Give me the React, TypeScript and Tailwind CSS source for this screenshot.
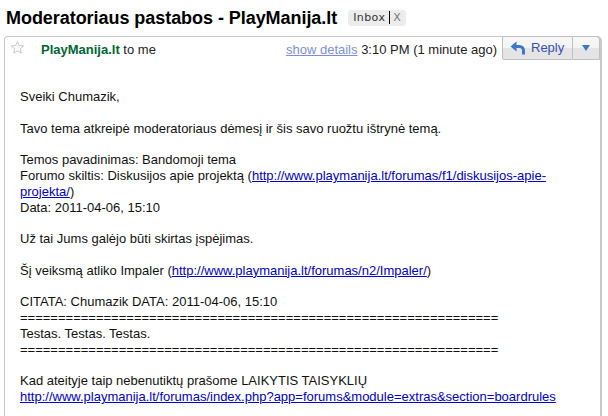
import React from "react";

function Star() {
  return (
    <svg width="15" height="15" viewBox="0 0 24 24" className="block">
      <path
        d="M12 2.5l2.9 6.3 6.9.7-5.2 4.7 1.5 6.8L12 17.6 5.9 21l1.5-6.8L2.2 9.5l6.9-.7z"
        fill="#fafafa"
        stroke="#c8c8c8"
        strokeWidth="1.6"
        strokeLinejoin="round"
      />
    </svg>
  );
}

function ReplyArrow() {
  return (
    <svg width="16" height="14" viewBox="0 0 16 14" className="block">
      <path d="M0.5 5.5 L6.5 0.5 L6.5 10.5 Z" fill="#3d78c8" />
      <path
        d="M6 5.5 H9.5 A4 4 0 0 1 13.5 9.5 V13.5"
        fill="none"
        stroke="#3d78c8"
        strokeWidth="3"
      />
    </svg>
  );
}

export default function App() {
  const eq = "=".repeat(63);
  const link = "text-[#0000cc] underline";
  return (
    <div className="w-[608px] h-[416px] overflow-hidden bg-white font-['Liberation_Sans',Arial,sans-serif] text-black">
      <div className="flex items-center h-[34px] pl-[6px] pt-[1px]">
        <div className="text-[18px] font-bold leading-[24px] tracking-[-0.05px]">
          Moderatoriaus pastabos - PlayManija.lt
        </div>
        <div className="ml-[11px] flex items-center h-[16px] rounded-[3px] bg-[#ececec] px-[5px] font-['DejaVu_Sans',sans-serif] text-[11px] leading-[16px]">
          <span className="text-[#333] tracking-[0.4px]">Inbox</span>
          <span className="ml-[4px] w-px h-[13px] bg-black" />
          <span className="ml-[3px] text-[#777]">X</span>
        </div>
      </div>
      <div className="ml-[4px] mr-[6px] mt-[2px] h-[400px] border-l border-t border-r-2 border-l-[#c8c8c8] border-t-[#c8c8c8] border-r-[#c8c8c8] rounded-tl-[4px] rounded-tr-[5px]">
        <div className="flex items-start h-[52px] text-[13px]">
          <div className="pt-[3px] pl-[5px]">
            <Star />
          </div>
          <div className="ml-[16px] pt-[5px] leading-[16px]">
            <span className="font-bold text-[#006633]">PlayManija.lt</span>
            <span className="text-[#222]"> to me</span>
          </div>
          <div className="ml-auto pt-[5px] leading-[16px] text-[#222]">
            <span className="text-[#7b8fdc] underline">show details</span>{" "}
            3:10 PM (1 minute ago)
          </div>
          <div className="ml-[5px] -mt-px flex h-[24px]">
            <div className="flex items-center w-[71px] h-full border border-[#c0c0c0] rounded-l-[2px] bg-[linear-gradient(#f7f7f7_0%,#f4f4f4_50%,#e4e4e4_50%,#e4e4e4_100%)] pl-[7px] gap-[5px]">
              <ReplyArrow />
              <span className="text-[#3550b8] text-[13px] leading-[16px]">Reply</span>
            </div>
            <div className="flex items-center justify-center w-[27px] h-full border border-l-0 border-[#c0c0c0] rounded-tr-[4px] bg-[linear-gradient(#f7f7f7_0%,#f4f4f4_50%,#e4e4e4_50%,#e4e4e4_100%)]">
              <svg width="8" height="6" viewBox="0 0 8 6" className="block">
                <path d="M0 0 H8 L4 6 Z" fill="#3d78c8" />
              </svg>
            </div>
          </div>
        </div>
        <div className="pl-[15px] text-[13px] leading-[15.8px] text-[#111]">
          <div>Sveiki Chumazik,</div>
          <div>&nbsp;</div>
          <div>Tavo tema atkreipė moderatoriaus dėmesį ir šis savo ruožtu ištrynė temą.</div>
          <div>&nbsp;</div>
          <div>Temos pavadinimas: Bandomoji tema</div>
          <div>
            Forumo skiltis: Diskusijos apie projektą (
            <span className={link}>http://www.playmanija.lt/forumas/f1/diskusijos-apie-</span>
          </div>
          <div>
            <span className={link}>projekta/</span>)
          </div>
          <div>Data: 2011-04-06, 15:10</div>
          <div>&nbsp;</div>
          <div>Už tai Jums galėjo būti skirtas įspėjimas.</div>
          <div>&nbsp;</div>
          <div>
            Šį veiksmą atliko Impaler (
            <span className={link}>http://www.playmanija.lt/forumas/n2/Impaler/</span>)
          </div>
          <div>&nbsp;</div>
          <div>CITATA: Chumazik DATA: 2011-04-06, 15:10</div>
          <div>{eq}</div>
          <div>Testas. Testas. Testas.</div>
          <div>{eq}</div>
          <div>&nbsp;</div>
          <div>Kad ateityje taip nebenutiktų prašome LAIKYTIS TAISYKLIŲ</div>
          <div>
            <span className={link}>
              http://www.playmanija.lt/forumas/index.php?app=forums&amp;module=extras&amp;section=boardrules
            </span>
          </div>
        </div>
      </div>
    </div>
  );
}
